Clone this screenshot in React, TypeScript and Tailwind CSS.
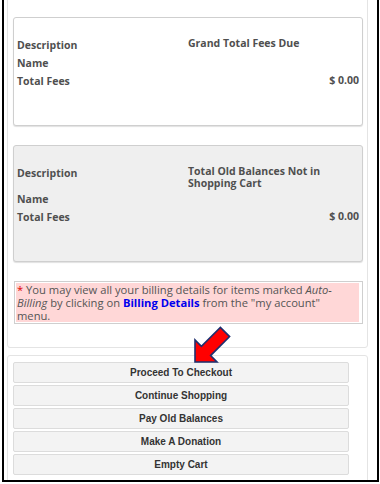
import React from "react";

const FeeCard = ({ title, shaded }: { title: string; shaded?: boolean }) => (
  <div
    className={`ml-[5px] w-[350px] rounded-[3px] border border-[#cfcfcf] pl-[3px] pr-[3px] pt-[19px] pb-[36px] shadow-[0_1px_1px_rgba(0,0,0,0.12)] ${
      shaded ? "bg-[#efefef]" : "bg-white"
    }`}
  >
    <div className="flex items-start">
      <div className="w-[171px] text-[10.5px] leading-[16px]">Description</div>
      <div className="w-[140px] text-[10.5px] leading-[12px]">{title}</div>
    </div>
    <div className="mt-[2px] text-[10.5px] leading-[16px]">Name</div>
    <div className="mt-[2px] flex items-center justify-between text-[10.5px] leading-[16px]">
      <span>Total Fees</span>
      <span className="-mt-[2px]">$ 0.00</span>
    </div>
  </div>
);

const buttons = [
  "Proceed To Checkout",
  "Continue Shopping",
  "Pay Old Balances",
  "Make A Donation",
  "Empty Cart",
];

export default function App() {
  return (
    <div className="relative h-[484px] w-[380px] overflow-hidden bg-white">
      <div className="ml-[2px] h-[482px] w-[377px] overflow-hidden border-x-2 border-b-2 border-black">
        {/* cart summary */}
        <div
          className="-mt-[3px] ml-[3px] w-[361px] rounded-[3px] border border-[#e4e4e4] pt-[19px] pb-[23px] font-bold text-[#4f4f4f]"
          style={{ fontFamily: '"Open Sans", Arial, sans-serif' }}
        >
          <FeeCard title="Grand Total Fees Due" />
          <div className="mt-[19px]">
            <FeeCard title="Total Old Balances Not in Shopping Cart" shaded />
          </div>
          <div className="mt-[19px] ml-[6px] w-[349px] border border-[#cfcfcf] bg-white pt-[1px] pl-[1px] pr-[3px] pb-[1px]">
            <div className="bg-[#ffd7d7] pl-[1px] text-[11.2px] font-normal leading-[13px] text-[#555]">
              <span className="text-[#d00]">*</span> You may view all your billing details for items marked{" "}
              <i>Auto-</i>
              <br />
              <i>Billing</i> by clicking on{" "}
              <b className="text-[#0000ee]">Billing Details</b> from the "my account"
              <br />
              menu.
            </div>
          </div>
        </div>

        {/* actions */}
        <div
          className="mt-[7px] ml-[3px] w-[361px] rounded-[3px] border border-[#e4e4e4] pt-[6px] pb-[10px]"
          style={{ fontFamily: '"Liberation Sans", Arial, sans-serif' }}
        >
          <div className="ml-[5px] flex w-[336px] flex-col gap-[2px]">
            {buttons.map((b) => (
              <button
                key={b}
                className="h-[21px] rounded-[2px] border border-[#dcdcdc] bg-[#f3f3f3] text-center text-[10px] font-bold text-[#333]"
              >
                {b}
              </button>
            ))}
          </div>
        </div>
      </div>

      {/* red arrow pointing at checkout */}
      <svg
        className="pointer-events-none absolute left-[188px] top-[319px]"
        width="48"
        height="50"
        viewBox="0 0 48 50"
      >
        <polygon
          points="7,43 7,21 13.4,27.4 32.4,8.4 41.6,17.6 22.6,36.6 29,43"
          fill="#ff0000"
          stroke="#1e2f6e"
          strokeWidth="1.6"
          strokeLinejoin="miter"
        />
      </svg>
    </div>
  );
}
